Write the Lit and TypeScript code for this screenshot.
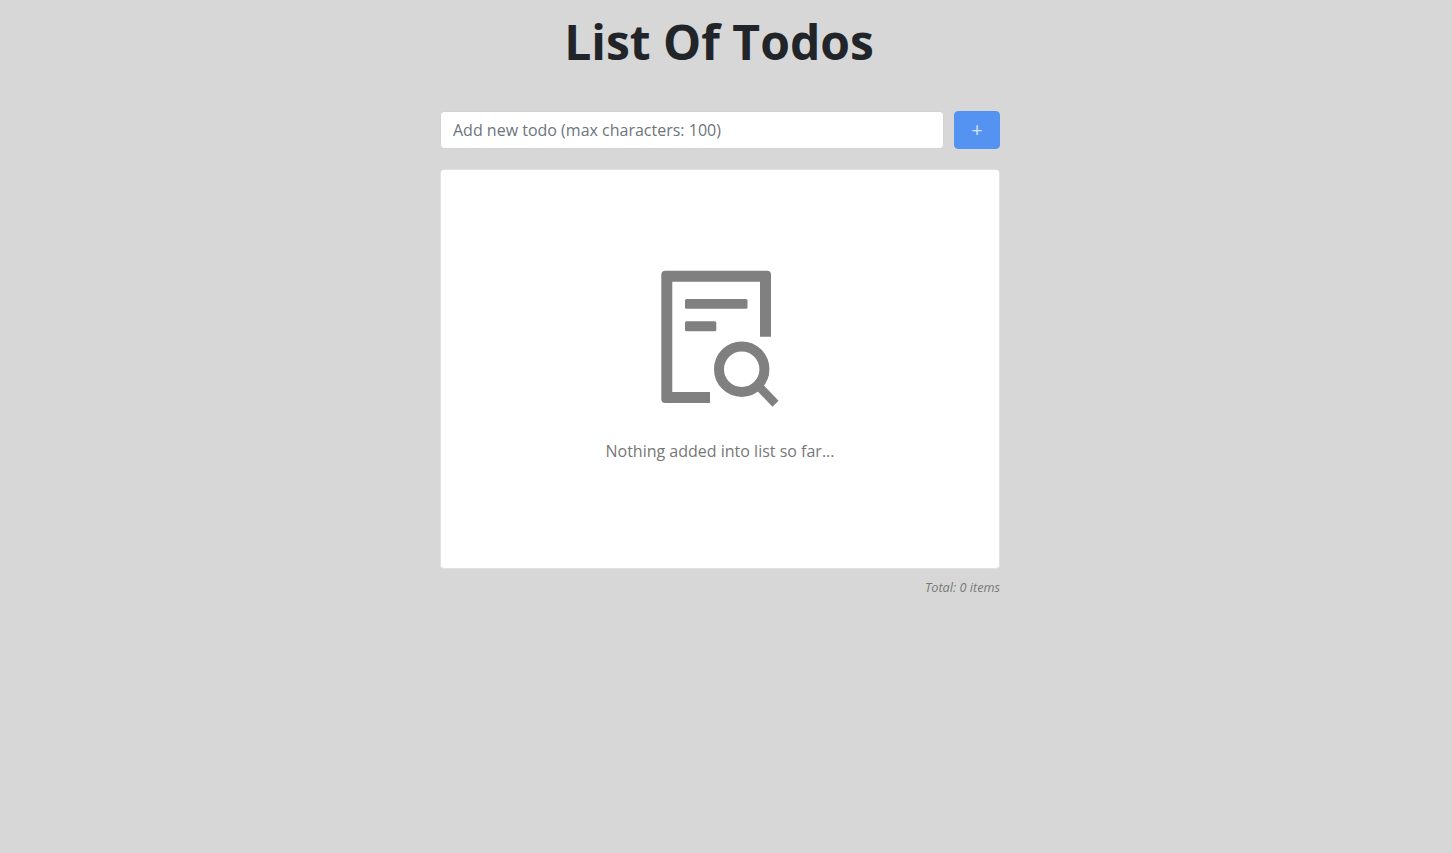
import { LitElement, html, css } from "lit";
import { customElement } from "lit/decorators.js";

@customElement("app-root")
export class AppRoot extends LitElement {
  render() {
    return html`
      <main class="page">
        <h1>List Of Todos</h1>
        <form class="add-form" @submit=${(e: Event) => e.preventDefault()}>
          <input type="text" placeholder="Add new todo (max characters: 100)" />
          <button type="submit">+</button>
        </form>
        <section class="list">
          <svg viewBox="0 0 120 140" width="120" height="140" aria-hidden="true">
            <path
              d="M1.3 4.700a4 4 0 0 1 4-4H107a4 4 0 0 1 4 4v62h-11V11.700H12.300V122H50v11H5.300a4 4 0 0 1-4-4Z"
              fill="#808080"
            />
            <rect x="25" y="29" width="62.500" height="9.700" rx="1.500" fill="#808080" />
            <rect x="25" y="51.300" width="31.300" height="10" rx="1.500" fill="#808080" />
            <circle cx="81.700" cy="99.200" r="22.700" fill="none" stroke="#808080" stroke-width="10" />
            <path d="M97.500 115 L115.500 133.700" fill="none" stroke="#808080" stroke-width="8.500" />
          </svg>
          <p class="empty">Nothing added into list so far...</p>
        </section>
        <p class="total">Total: 0 items</p>
      </main>
    `;
  }

  static styles = css`
    :host {
      display: block;
      box-sizing: border-box;
      min-height: 853px;
      padding-right: 12px;
      background: #d7d7d7;
      font-family: "Open Sans", sans-serif;
      color: #212529;
    }
    .page {
      width: 560px;
      margin: 0 auto;
      padding-top: 12px;
    }
    h1 {
      margin: 0 0 39px;
      padding-right: 2px;
      font-size: 48px;
      line-height: 60px;
      font-weight: 700;
      text-align: center;
    }
    .add-form {
      display: flex;
      gap: 10px;
      margin-bottom: 20px;
    }
    input {
      flex: 1;
      box-sizing: border-box;
      height: 38px;
      padding: 6px 12px;
      border: 1px solid #ced4da;
      border-radius: 4px;
      background: #fff;
      font: 400 16px/24px "Open Sans", sans-serif;
      color: #495057;
      outline: none;
    }
    input::placeholder {
      color: #6c757d;
      opacity: 1;
    }
    button {
      width: 46px;
      height: 38px;
      padding: 0;
      border: 1px solid #5593f2;
      border-radius: 4px;
      background: #5593f2;
      color: #d5e4f5;
      font: 400 20px/24px "Open Sans", sans-serif;
    }
    .list {
      box-sizing: border-box;
      height: 400px;
      padding-top: 100px;
      display: flex;
      flex-direction: column;
      align-items: center;
      background: #fff;
      border: 1px solid #dee2e6;
      border-radius: 4px;
    }
    svg {
      display: block;
    }
    .empty {
      margin: 29px 0 0;
      font-size: 16px;
      line-height: 24px;
      color: #777;
    }
    .total {
      margin: 9px 0 0;
      font-size: 12.700px;
      line-height: 18px;
      font-style: italic;
      text-align: right;
      color: #777;
    }
  `;
}
